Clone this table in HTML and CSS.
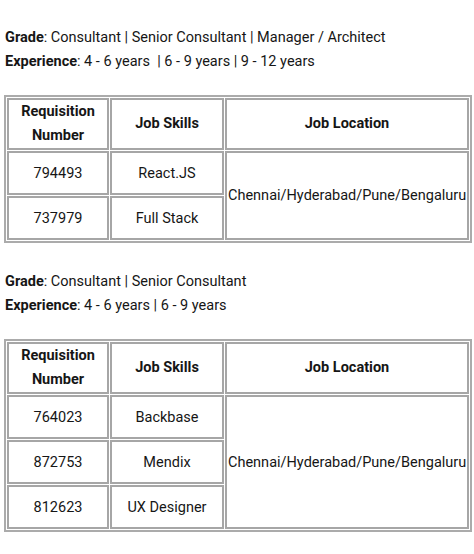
FILE: index.html
```html
<!DOCTYPE html>
<html>
<head>
<meta charset="utf-8">
<link rel="stylesheet" href="styles.css">
</head>
<body>
<div class="block">
  <p class="info"><b>Grade</b>: Consultant | Senior Consultant | Manager / Architect<br><b>Experience</b>: 4 - 6 years &nbsp;| 6 - 9 years | 9 - 12 years</p>
  <table class="jobs">
    <colgroup><col class="c1"><col class="c2"><col class="c3"></colgroup>
    <tr><th>Requisition Number</th><th>Job Skills</th><th>Job Location</th></tr>
    <tr><td>794493</td><td>React.JS</td><td rowspan="2">Chennai/Hyderabad/Pune/Bengaluru</td></tr>
    <tr><td>737979</td><td>Full Stack</td></tr>
  </table>
</div>
<div class="block second">
  <p class="info"><b>Grade</b>: Consultant | Senior Consultant<br><b>Experience</b>: 4 - 6 years | 6 - 9 years</p>
  <table class="jobs">
    <colgroup><col class="c1"><col class="c2"><col class="c3"></colgroup>
    <tr><th>Requisition Number</th><th>Job Skills</th><th>Job Location</th></tr>
    <tr><td>764023</td><td>Backbase</td><td rowspan="3">Chennai/Hyderabad/Pune/Bengaluru</td></tr>
    <tr><td>872753</td><td>Mendix</td></tr>
    <tr><td>812623</td><td>UX Designer</td></tr>
  </table>
</div>
</body>
</html>
```
FILE: styles.css
```css
html, body {
  margin: 0;
  padding: 0;
  background: #fff;
}
body {
  font-family: Roboto, "Liberation Sans", sans-serif;
  font-size: 14.5px;
  color: #161616;
  padding: 26px 0 0 0;
}
.info {
  margin: 0 0 21px 5px;
  line-height: 24px;
}
.info b {
  font-weight: 700;
}
.second {
  margin-top: 27px;
}
.jobs {
  margin-left: 4px;
  width: 468px;
  table-layout: fixed;
  border: 2px solid #ababab;
  border-spacing: 1px;
  border-collapse: separate;
}
.c1 { width: 102px; }
.c2 { width: 114px; }
.jobs th, .jobs td {
  border: 2px solid #a6a6a6;
  text-align: center;
  vertical-align: middle;
  line-height: 23px;
  padding: 0;
}
.jobs th {
  font-weight: 700;
  height: 47px;
  padding: 0 8px;
  line-height: 24px;
}
.jobs td {
  height: 40px;
  padding: 0 1px;
}
```
